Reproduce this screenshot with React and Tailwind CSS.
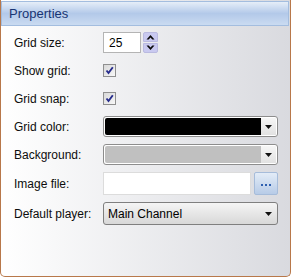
import React from "react";

function Arrow({ up = false }) {
  return (
    <svg width="9" height="6" viewBox="0 0 9 6" className={up ? "rotate-180" : ""}>
      <path d="M0.5 0.5 L4.5 5 L8.5 0.5 L6.3 0.5 L4.5 2.6 L2.7 0.5 Z" fill="#0a0a0a" />
    </svg>
  );
}

function Combo({ fill, children }) {
  return (
    <div className="flex h-full w-[175px] overflow-hidden rounded-[3px] border border-[#8d8d8d] bg-white p-[1px]">
      <div className={`flex flex-1 items-center rounded-l-[2px] px-[3px] ${fill}`}>{children}</div>
      <div className="flex w-[15px] items-center justify-center bg-gradient-to-b from-[#f6f6f6] to-[#e2e2e2]">
        <svg width="7" height="4" viewBox="0 0 7 4">
          <path d="M0 0 L7 0 L3.5 4 Z" fill="#111" />
        </svg>
      </div>
    </div>
  );
}

function Check() {
  return (
    <div className="flex h-[13px] w-[13px] items-center justify-center border border-[#8f8f8f] bg-gradient-to-br from-[#d8d8d8] to-[#f8f8f8]">
      <svg width="9" height="9" viewBox="0 0 9 9">
        <path d="M1.5 4.5 L3.5 7 L7.8 1.2" stroke="#262c8c" strokeWidth="1.9" fill="none" />
      </svg>
    </div>
  );
}

function Row({ label, h, mt, children }) {
  return (
    <div className={`flex items-center ${h} ${mt}`}>
      <div className="w-[89px] text-[12px] text-[#0d0d0d]">{label}</div>
      {children}
    </div>
  );
}

export default function App() {
  return (
    <div className="h-[277px] w-[291px] bg-white font-['Liberation_Sans',sans-serif]">
      <div className="flex h-[277px] w-[291px] flex-col rounded-b-[5px] border border-t-0 border-[#b8784a] bg-gradient-to-r from-white to-[#d9dadf]">
        <div className="mt-[1px] mr-[1px] flex h-[25px] items-center border border-[#a3bddf] bg-gradient-to-b from-[#e6eef8] via-[#b3c9e9] to-[#cadbf1] pl-[7px] text-[13px] text-[#183573]">
          Properties
        </div>
        <div className="flex flex-col pl-[13px]">
          <Row label="Grid size:" h="h-[21px]" mt="mt-[6px]">
            <div className="flex h-full">
              <div className="flex w-[38px] items-center border border-[#b4b4b4] bg-white pl-[5px] text-[12px] text-black">
                25
              </div>
              <div className="ml-[2px] flex w-[15px] flex-col gap-[1px]">
                <div className="flex flex-1 items-center justify-center rounded-t-[2px] border border-[#babae0] bg-[#c9c9f0]">
                  <Arrow up />
                </div>
                <div className="flex flex-1 items-center justify-center rounded-b-[2px] border border-[#babae0] bg-[#c9c9f0]">
                  <Arrow />
                </div>
              </div>
            </div>
          </Row>
          <Row label="Show grid:" h="h-[13px]" mt="mt-[11px]">
            <Check />
          </Row>
          <Row label="Grid snap:" h="h-[13px]" mt="mt-[15px]">
            <Check />
          </Row>
          <Row label="Grid color:" h="h-[21px]" mt="mt-[11px]">
            <Combo fill="bg-black" />
          </Row>
          <Row label="Background:" h="h-[21px]" mt="mt-[7px]">
            <Combo fill="bg-[#c0c0c0]" />
          </Row>
          <Row label="Image file:" h="h-[23px]" mt="mt-[7px]">
            <div className="h-full w-[148px] border border-[#dcdcdc] bg-white" />
            <div className="ml-[3px] flex h-full w-[24px] items-center justify-center gap-[2px] rounded-[2px] border border-[#a6bcda] bg-gradient-to-b from-[#e3ecf7] to-[#b7cbe7] pt-[2px]">
              <div className="h-[2px] w-[2px] bg-[#2d5fb0]" />
              <div className="h-[2px] w-[2px] bg-[#2d5fb0]" />
              <div className="h-[2px] w-[2px] bg-[#2d5fb0]" />
            </div>
          </Row>
          <Row label="Default player:" h="h-[23px]" mt="mt-[7px]">
            <div className="flex h-full w-[175px] items-center rounded-[3px] border border-[#7f7f7f] bg-gradient-to-b from-[#f5f5f5] to-[#d8d8d8] pl-[4px] pr-[5px] text-[12px] text-black">
              <span className="flex-1">Main Channel</span>
              <svg width="7" height="4" viewBox="0 0 7 4">
                <path d="M0 0 L7 0 L3.5 4 Z" fill="#111" />
              </svg>
            </div>
          </Row>
        </div>
      </div>
    </div>
  );
}
